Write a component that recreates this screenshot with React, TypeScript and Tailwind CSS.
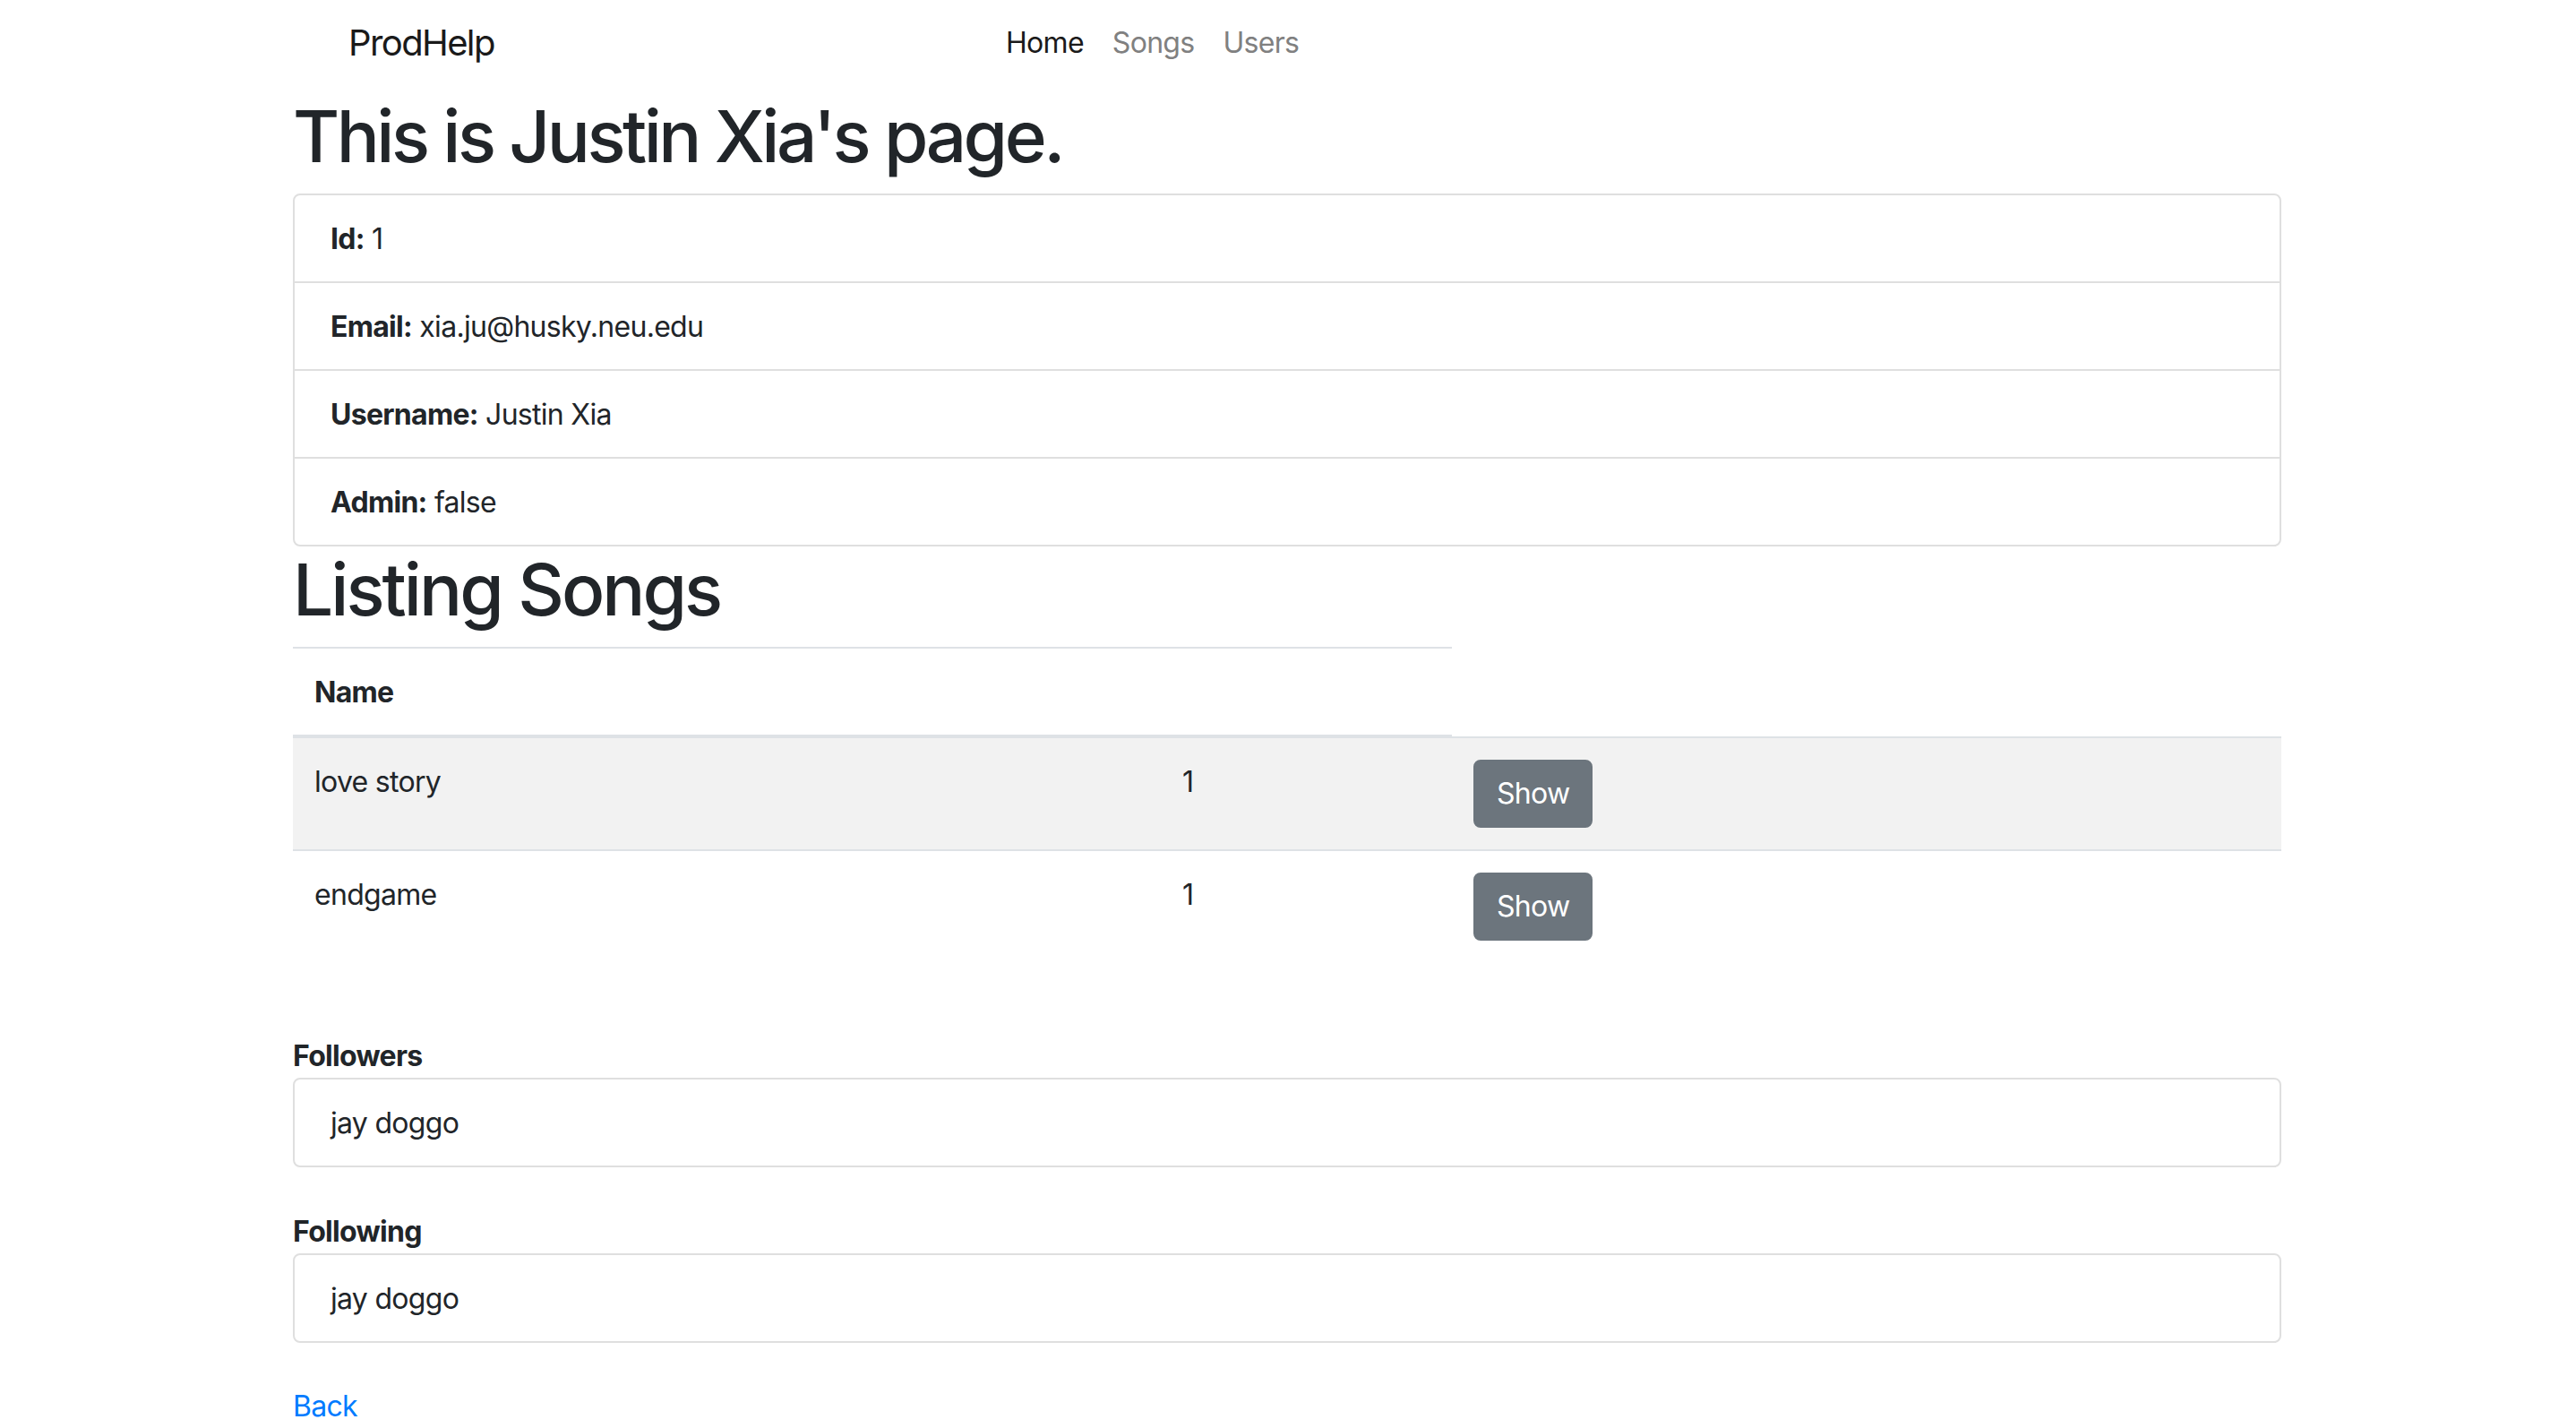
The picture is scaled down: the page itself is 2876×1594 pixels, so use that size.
import React from "react";

const font = "font-['Inter','Liberation_Sans',sans-serif]";

function Item({ label, value }: { label: string; value: string }) {
  return (
    <div className="px-[40px] pt-[25px] pb-[23px] text-[32px] leading-[48px] tracking-[-0.022em]">
      <span className="font-bold">{label}</span> {value}
    </div>
  );
}

function Row({ name, count, striped }: { name: string; count: string; striped?: boolean }) {
  return (
    <div className={`flex border-t-2 border-[#dee2e6] ${striped ? "bg-[#f2f2f2]" : "bg-white"}`}>
      <div className="w-[969px] px-[24px] pt-[25px] pb-[23px] text-[32px] leading-[48px] tracking-[-0.022em]">{name}</div>
      <div className="w-[325px] px-[24px] pt-[25px] pb-[23px] text-[32px] leading-[48px] tracking-[-0.022em]">{count}</div>
      <div className="flex-1 p-[24px]">
        <button className="h-[76px] px-[24px] rounded-[8px] border-2 border-[#6c757d] bg-[#6c757d] text-white text-[32px] leading-[48px] tracking-[-0.022em]">
          Show
        </button>
      </div>
    </div>
  );
}

export default function App() {
  return (
    <div className={`min-h-screen bg-white text-[#212529] ${font}`}>
      <nav className="flex items-center h-[104px] pb-[8px] pl-[389px]">
        <div className="w-[718px] text-[40px] leading-[60px] text-[#1a1a1a] tracking-[-0.04em]">ProdHelp</div>
        <ul className="flex text-[32px] leading-[48px] tracking-[-0.022em]">
          <li className="px-[16px] text-[#1a1a1a]">Home</li>
          <li className="px-[16px] text-[#808080]">Songs</li>
          <li className="px-[16px] text-[#808080]">Users</li>
        </ul>
      </nav>
      <main className="w-[2220px] ml-[327px]">
        <h1 className="text-[80px] leading-[96px] font-medium mb-[16px] tracking-[-0.044em]">This is Justin Xia's page.</h1>
        <div className="border-2 border-[#dfdfdf] rounded-[8px] divide-y-2 divide-[#dfdfdf]">
          <Item label="Id:" value="1" />
          <Item label="Email:" value="xia.ju@husky.neu.edu" />
          <Item label="Username:" value="Justin Xia" />
          <Item label="Admin:" value="false" />
        </div>
        <h2 className="text-[80px] leading-[96px] font-medium mb-[16px] tracking-[-0.037em]">Listing Songs</h2>
        <div>
          <div className="flex w-[1294px] border-t-2 border-b-4 border-[#dee2e6]">
            <div className="w-[969px] px-[24px] pt-[25px] pb-[23px] text-[32px] leading-[48px] font-bold tracking-[-0.022em]">Name</div>
            <div className="w-[325px] p-[24px]"></div>
          </div>
          <div className="-mt-[2px]">
            <Row name="love story" count="1" striped />
            <Row name="endgame" count="1" />
          </div>
        </div>
        <div className="mt-[81px] text-[32px] leading-[48px] font-bold tracking-[-0.022em]">Followers</div>
        <div className="border-2 border-[#dfdfdf] rounded-[8px]">
          <div className="px-[40px] pt-[25px] pb-[23px] text-[32px] leading-[48px] tracking-[-0.022em]">jay doggo</div>
        </div>
        <div className="mt-[48px] text-[32px] leading-[48px] font-bold tracking-[-0.022em]">Following</div>
        <div className="border-2 border-[#dfdfdf] rounded-[8px]">
          <div className="px-[40px] pt-[25px] pb-[23px] text-[32px] leading-[48px] tracking-[-0.022em]">jay doggo</div>
        </div>
        <div className="mt-[47px] text-[32px] leading-[48px] tracking-[-0.022em]">
          <a className="text-[#007bff]" href="#">Back</a>
        </div>
      </main>
    </div>
  );
}
